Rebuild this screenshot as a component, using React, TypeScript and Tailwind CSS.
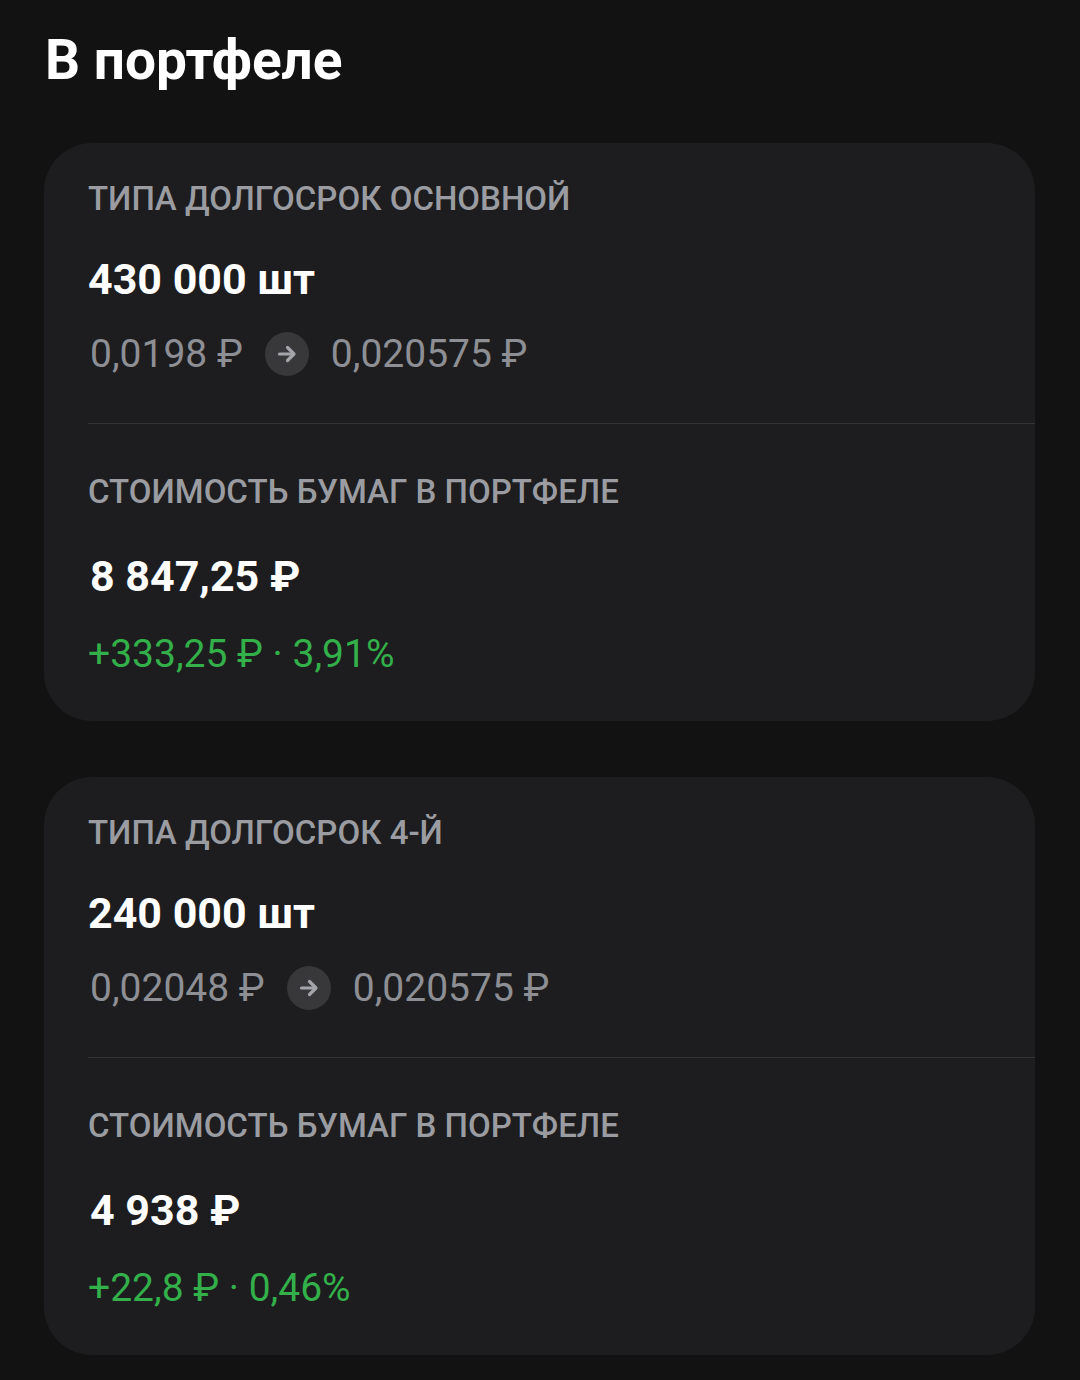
import React from "react";

function Arrow() {
  return (
    <div className="mx-[22px] flex h-[44px] w-[44px] shrink-0 items-center justify-center rounded-full bg-[#38383b]">
      <svg width="24" height="24" viewBox="0 0 24 24" fill="none" stroke="#a3a5aa" strokeWidth="3.2" strokeLinecap="round" strokeLinejoin="round">
        <path d="M4.5 12h14" />
        <path d="M12.5 5.5 19 12l-6.5 6.5" />
      </svg>
    </div>
  );
}

type CardProps = {
  title: string;
  qty: string;
  from: string;
  to: string;
  value: string;
  change: string;
};

function Card({ title, qty, from, to, value, change }: CardProps) {
  return (
    <div className="rounded-[48px] bg-[#1d1d1f] pl-[44px] pt-[36px] pb-[43px]">
      <div className="text-[33px] leading-[40px] font-medium uppercase text-[#9a9ca1]">{title}</div>
      <div className="mt-[36px] text-[43px] leading-[48px] font-bold text-white">{qty}</div>
      <div className="mt-[27px] flex items-center text-[39px] leading-[48px] text-[#8d8f94]">
        <span className="pl-[2px]">{from}</span>
        <Arrow />
        <span>{to}</span>
      </div>
      <div className="mt-[45px] h-px bg-[#333335]" />
      <div className="mt-[48px] text-[33px] leading-[40px] font-medium uppercase text-[#9a9ca1]">Стоимость бумаг в портфеле</div>
      <div className="mt-[40px] pl-[2px] text-[43px] leading-[48px] font-bold text-white">{value}</div>
      <div className="mt-[30px] text-[39px] leading-[48px] text-[#33b04a]">{change}</div>
    </div>
  );
}

export default function App() {
  return (
    <div
      className="min-h-[1380px] w-[1080px] bg-[#121212] px-[44px] pt-[24px]"
      style={{ fontFamily: "Roboto, 'Noto Sans', sans-serif" }}
    >
      <h1 className="pl-[1px] text-[55px] leading-[72px] font-bold text-white">В портфеле</h1>
      <div className="mt-[47px] flex w-[991px] flex-col gap-[56px]">
        <Card
          title="Типа долгосрок основной"
          qty="430 000 шт"
          from="0,0198 ₽"
          to="0,020575 ₽"
          value="8 847,25 ₽"
          change="+333,25 ₽ · 3,91%"
        />
        <Card
          title="Типа долгосрок 4-й"
          qty="240 000 шт"
          from="0,02048 ₽"
          to="0,020575 ₽"
          value="4 938 ₽"
          change="+22,8 ₽ · 0,46%"
        />
      </div>
    </div>
  );
}
